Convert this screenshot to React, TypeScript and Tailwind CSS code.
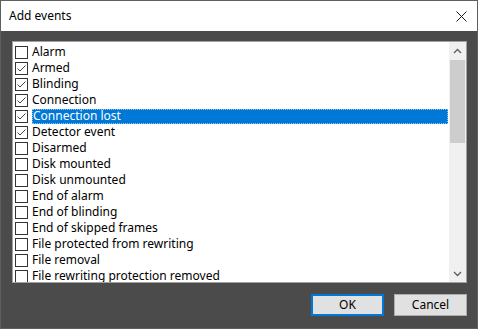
import React from 'react';

const events = [
    { label: 'Alarm', checked: false },
    { label: 'Armed', checked: true },
    { label: 'Blinding', checked: true },
    { label: 'Connection', checked: true },
    { label: 'Connection lost', checked: true, selected: true },
    { label: 'Detector event', checked: true },
    { label: 'Disarmed', checked: false },
    { label: 'Disk mounted', checked: false },
    { label: 'Disk unmounted', checked: false },
    { label: 'End of alarm', checked: false },
    { label: 'End of blinding', checked: false },
    { label: 'End of skipped frames', checked: false },
    { label: 'File protected from rewriting', checked: false },
    { label: 'File removal', checked: false },
    { label: 'File rewriting protection removed', checked: false },
];

const CheckBox: React.FC<{ checked: boolean }> = ({ checked }) => (
    <div className="w-[13px] h-[13px] shrink-0 border border-[#333333] bg-white flex items-center justify-center">
        {checked && (
            <svg width="11" height="11" viewBox="0 0 11 11">
                <path d="M1.5 5.5 L4 8 L9.5 2.5" fill="none" stroke="#444444" strokeWidth="1" />
            </svg>
        )}
    </div>
);

const App: React.FC = () => {
    return (
        <div className="w-[478px] h-[329px] border border-[#5f5f5f] bg-[#4b4b4b] flex flex-col" style={{ fontFamily: '"Noto Sans", "Liberation Sans", sans-serif' }}>
            {/* title bar */}
            <div className="h-[30px] bg-white flex items-center justify-between pl-[8px] pr-[10px] shrink-0">
                <span className="text-[12px] text-black">Add events</span>
                <svg width="11" height="11" viewBox="0 0 11 11">
                    <path d="M0.5 0.5 L10.5 10.5 M10.5 0.5 L0.5 10.5" stroke="#1a1a1a" strokeWidth="1" />
                </svg>
            </div>

            <div className="flex-1 flex flex-col pl-[11px] pr-[10px] pt-[10px]">
                {/* list box */}
                <div className="h-[242px] border border-[#a0a0a0] bg-white flex overflow-hidden">
                    <div className="flex-1 pt-[2px] pl-[2px] pr-[1px] overflow-hidden">
                        {events.map((ev, idx) => (
                            <div key={idx} className="h-[16px] flex items-center gap-[4px]">
                                <CheckBox checked={ev.checked} />
                                <div
                                    className={
                                        ev.selected
                                            ? 'flex-1 h-[15px] flex items-center bg-[#0078d7] text-white border border-dotted border-[#9cc3e8]'
                                            : 'flex-1 h-[15px] flex items-center text-black'
                                    }
                                >
                                    <span className="text-[12px] leading-none whitespace-nowrap">{ev.label}</span>
                                </div>
                            </div>
                        ))}
                    </div>
                    {/* scrollbar */}
                    <div className="w-[17px] bg-[#f0f0f0] flex flex-col shrink-0">
                        <div className="h-[17px] flex items-center justify-center">
                            <svg width="9" height="6" viewBox="0 0 9 6">
                                <path d="M1 5 L4.5 1.5 L8 5" fill="none" stroke="#606060" strokeWidth="1.4" />
                            </svg>
                        </div>
                        <div className="flex-1 px-[1px]">
                            <div className="h-[83px] mt-[1px] bg-[#cdcdcd]" />
                        </div>
                        <div className="h-[17px] flex items-center justify-center">
                            <svg width="9" height="6" viewBox="0 0 9 6">
                                <path d="M1 1 L4.5 4.5 L8 1" fill="none" stroke="#606060" strokeWidth="1.4" />
                            </svg>
                        </div>
                    </div>
                </div>

                {/* buttons */}
                <div className="flex justify-end gap-[10px] mt-[11px]">
                    <button className="w-[73px] h-[22px] bg-[#e1e1e1] border-2 border-[#0078d7] text-[12px] text-black">
                        OK
                    </button>
                    <button className="w-[73px] h-[22px] bg-[#e1e1e1] border border-[#adadad] text-[12px] text-black">
                        Cancel
                    </button>
                </div>
            </div>
        </div>
    );
};

export default App;
